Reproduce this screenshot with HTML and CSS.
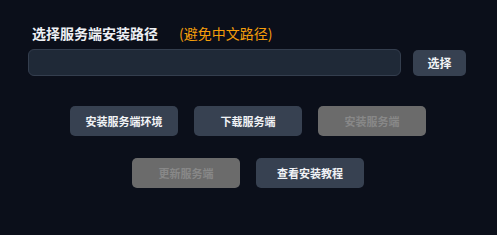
FILE: index.html
```html
<!DOCTYPE html>
<html lang="zh-CN">
<head>
    <meta charset="UTF-8">
    <title>服务端安装</title>
    <link rel="stylesheet" href="styles.css">
</head>
<body>
    <div class="panel">
        <div class="field-head">
            <span class="field-label">选择服务端安装路径</span>
            <span class="field-hint">(避免中文路径)</span>
        </div>
        <div class="path-row">
            <input type="text" class="path-input">
            <button class="btn btn-pick">选择</button>
        </div>

        <div class="actions">
            <div class="action-row">
                <button class="btn">安装服务端环境</button>
                <button class="btn">下载服务端</button>
                <button class="btn" disabled>安装服务端</button>
            </div>
            <div class="action-row">
                <button class="btn" disabled>更新服务端</button>
                <button class="btn">查看安装教程</button>
            </div>
        </div>
    </div>
</body>
</html>
```

FILE: styles.css
```css
/* Grundlayout */
body {
    margin: 0;
    background: #0b0f1a;
    font-family: "Noto Sans CJK SC", "Noto Sans", sans-serif;
    color: #e5e7eb;
}
.panel {
    padding: 22px 31px 0 28px;
}
.field-head {
    display: flex;
    align-items: baseline;
    gap: 21px;
    padding-left: 4px;
    line-height: 22px;
}
.field-label {
    font-size: 14px;
    font-weight: bold;
    color: #eef0f4;
}
.field-hint {
    font-size: 14px;
    color: #f59e0b;
}
.path-row {
    display: flex;
    align-items: center;
    gap: 12px;
    margin-top: 5px;
}
.path-input {
    flex: 1;
    height: 27px;
    box-sizing: border-box;
    background: #1f2937;
    border: 1px solid #343e4e;
    border-radius: 6px;
    color: #e5e7eb;
    outline: none;
}
.btn {
    width: 108px;
    height: 30px;
    border: none;
    border-radius: 5px;
    background: #374151;
    color: #f1f3f6;
    font-family: inherit;
    font-size: 11px;
    font-weight: bold;
    cursor: pointer;
}
.btn:disabled {
    background: #6b6b6b;
    color: #888888;
    cursor: not-allowed;
}
.btn-pick {
    width: 53px;
    height: 26px;
    font-size: 12px;
}
.actions {
    margin-top: 30px;
    display: flex;
    flex-direction: column;
    gap: 22px;
}
.action-row {
    display: flex;
    justify-content: center;
    gap: 16px;
    margin-left: -6px;
    margin-right: -8px;
}
```
